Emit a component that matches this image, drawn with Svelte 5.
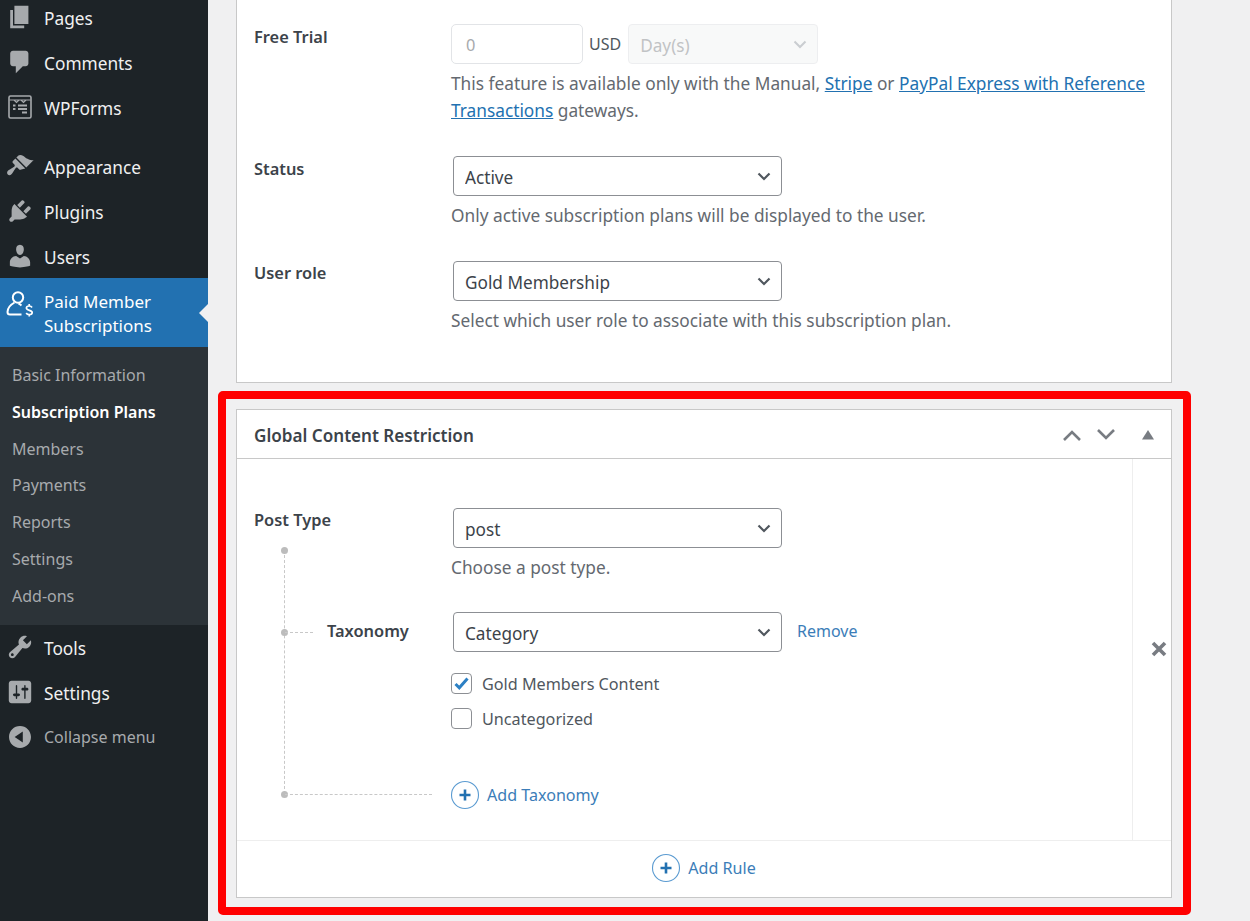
<script>
  // dashicons-style glyphs, 20x20 viewBox
  const icons = {
    pages: 'M6 15V2h10v13H6zm-1 1h8v2H3V5h2v11z',
    comments: 'M5 2h9c1.1 0 2 .9 2 2v7c0 1.1-.9 2-2 2h-2l-5 5v-5H5c-1.1 0-2-.9-2-2V4c0-1.1.9-2 2-2z',
    appearance: 'M14.48 11.06L7.41 3.99l1.5-1.5c.5-.56 2.3-.47 3.51.32 1.21.8 1.43 1.28 2.91 2.1 1.18.64 2.45 1.26 4.45.85zm-.71.71L6.7 4.7 4.93 6.47c-.39.39-.39 1.02 0 1.41l1.06 1.06c.39.39.39 1.03 0 1.42-.6.6-3.7 2.2-4.6 3.1-.9.9-.7 2-.1 2.6.6.6 1.7.7 2.6-.2.9-.9 2.5-3.9 3.1-4.5.39-.39 1.02-.39 1.41 0l1.06 1.06c.39.39 1.02.39 1.41 0z',
    plugins: 'M13.11 4.36L9.87 7.6 8 5.73l3.24-3.24c.35-.34 1.05-.2 1.56.32.52.51.66 1.21.31 1.55zm-8 1.77l.91-1.12 9.01 9.01-1.19.84c-.71.71-2.63 1.16-3.82 1.16H6.14L4.9 17.26c-.59.59-1.54.59-2.12 0-.59-.58-.59-1.53 0-2.12l1.24-1.24v-3.88c0-1.13.4-3.19 1.09-3.89zm7.26 3.97l3.24-3.24c.34-.35 1.04-.21 1.55.31.52.51.66 1.21.31 1.55l-3.24 3.25z',
    users: 'M10 9.25c-2.27 0-2.73-3.44-2.73-3.44C7 4.02 7.82 2 9.97 2c2.16 0 2.98 2.02 2.71 3.81 0 0-.41 3.44-2.68 3.44zm0 2.57L12.72 10c2.39 0 4.52 2.33 4.52 4.53v2.49s-3.65 1.13-7.24 1.13c-3.65 0-7.24-1.13-7.24-1.13v-2.49c0-2.25 1.94-4.48 4.47-4.48z',
    tools: 'M16.68 9.77c-1.34 1.34-3.3 1.67-4.95.99l-5.41 6.52c-.99.99-2.59.99-3.58 0s-.99-2.59 0-3.57l6.52-5.42c-.68-1.65-.35-3.61.99-4.95 1.28-1.28 3.12-1.62 4.72-1.06l-2.89 2.89 2.82 2.82 2.86-2.87c.53 1.58.18 3.39-1.08 4.65zM3.81 16.21c.4.39 1.04.39 1.43 0 .4-.4.4-1.04 0-1.43-.39-.4-1.03-.4-1.43 0-.39.39-.39 1.03 0 1.43z',
    settings: 'M18 16V4c0-1.1-.9-2-2-2H4c-1.1 0-2 .9-2 2v12c0 1.1.9 2 2 2h12c1.1 0 2-.9 2-2zM8 11h1c.55 0 1 .45 1 1s-.45 1-1 1H8v1.5c0 .28-.22.5-.5.5s-.5-.22-.5-.5V13H6c-.55 0-1-.45-1-1s.45-1 1-1h1V5.5c0-.28.22-.5.5-.5s.5.22.5.5V11zm5-2h-1c-.55 0-1-.45-1-1s.45-1 1-1h1V5.5c0-.28.22-.5.5-.5s.5.22.5.5V7h1c.55 0 1 .45 1 1s-.45 1-1 1h-1v5.5c0 .28-.22.5-.5.5s-.5-.22-.5-.5V9z',
    collapse: 'M10 2.16c4.33 0 7.84 3.51 7.84 7.84s-3.51 7.84-7.84 7.84S2.16 14.33 2.16 10 5.71 2.16 10 2.16zm2 11.72V6.12L6.18 9.97z'
  };

  const subItems = ['Basic Information', 'Subscription Plans', 'Members', 'Payments', 'Reports', 'Settings', 'Add-ons'];
</script>

{#snippet menuItem(label, icon)}
  <li class="menu-item">
    <span class="menu-icon">
      <svg viewBox="0 0 20 20" width="28" height="28"><path d={icons[icon]} fill="#a7aaad" /></svg>
    </span>
    {label}
  </li>
{/snippet}

{#snippet plusButton(label)}
  <span class="add-link">
    <svg viewBox="0 0 30 30" width="30" height="30">
      <circle cx="15" cy="15" r="13.5" fill="none" stroke="#5b9bd1" stroke-width="1.1" />
      <path d="M15 9.5v11M9.5 15h11" stroke="#2271b1" stroke-width="2.6" fill="none" />
    </svg>
    {label}
  </span>
{/snippet}

<div class="page">
  <nav class="sidebar">
    <ul class="menu">
      {@render menuItem('Pages', 'pages')}
      {@render menuItem('Comments', 'comments')}
      <li class="menu-item">
        <span class="menu-icon">
          <svg viewBox="0 0 24 24" width="24" height="24" fill="none" stroke="#a7aaad">
            <rect x="1" y="1" width="22" height="22" rx="1.5" stroke-width="1.6" />
            <path d="M1.5 5h21M6 5l2.5 2.5L11 5M13 5l2.5 2.5L18 5" stroke-width="1.1" />
            <path d="M5 10.5h2.5M10 10.5h9M5 14h2.5M10 14h9M14 17.5h5" stroke-width="1.8" />
          </svg>
        </span>
        WPForms
      </li>
    </ul>
    <ul class="menu second">
      {@render menuItem('Appearance', 'appearance')}
      {@render menuItem('Plugins', 'plugins')}
      <li class="menu-item users">
        <span class="menu-icon">
          <svg viewBox="0 0 20 20" width="28" height="28"><path d={icons.users} fill="#a7aaad" /></svg>
        </span>
        Users
      </li>
      <li class="menu-item current">
        <span class="menu-icon">
          <svg viewBox="0 0 28 28" width="28" height="28" fill="none" stroke="#fff" stroke-width="2">
            <circle cx="12" cy="7.5" r="5.2" />
            <path d="M8.5 12.5C4 15 1.5 19 1.5 22c0 1.5 1 2.5 2.5 2.5h11.5" />
            <path d="M15.5 15.5c-1-.8-1.8-1.5-3-2" />
            <path d="M26 17.5c-.5-1-1.5-1.5-2.8-1.5-1.6 0-2.8.8-2.8 2.1 0 3 5.8 1.5 5.8 4.5 0 1.3-1.2 2.1-2.9 2.1-1.4 0-2.5-.6-3.1-1.7M23.2 14v1.8M23.2 24.8v1.8" stroke-width="1.7" />
          </svg>
        </span>
        <span class="current-label">Paid Member Subscriptions</span>
        <span class="notch"></span>
      </li>
    </ul>
    <ul class="submenu">
      {#each subItems as item}
        <li class:active={item === 'Subscription Plans'}>{item}</li>
      {/each}
    </ul>
    <ul class="menu">
      {@render menuItem('Tools', 'tools')}
      {@render menuItem('Settings', 'settings')}
      <li class="menu-item collapse">
        <span class="menu-icon">
          <svg viewBox="0 0 20 20" width="28" height="28"><path d={icons.collapse} fill="#a7aaad" /></svg>
        </span>
        Collapse menu
      </li>
    </ul>
  </nav>

  <main class="content">
    <section class="card plan">
      <div class="row trial">
        <span class="label">Free Trial</span>
        <div>
          <div class="trial-fields">
            <input class="number" type="text" value="0" disabled />
            <span class="currency">USD</span>
            <select class="select unit" disabled><option>Day(s)</option></select>
          </div>
          <p class="help wide">
            This feature is available only with the Manual, <a href="#stripe">Stripe</a> or
            <a href="#paypal">PayPal Express with Reference</a>
            <a href="#paypal">Transactions</a> gateways.
          </p>
        </div>
      </div>
      <div class="row status">
        <span class="label">Status</span>
        <div>
          <select class="select"><option>Active</option></select>
          <p class="help">Only active subscription plans will be displayed to the user.</p>
        </div>
      </div>
      <div class="row role">
        <span class="label">User role</span>
        <div>
          <select class="select"><option>Gold Membership</option></select>
          <p class="help">Select which user role to associate with this subscription plan.</p>
        </div>
      </div>
    </section>

    <section class="card restriction">
      <header class="card-head">
        <h2>Global Content Restriction</h2>
        <div class="head-actions">
          <svg viewBox="0 0 20 12" width="20" height="12" fill="none" stroke="#787c82" stroke-width="2.6"><path d="M2 11l8-8 8 8" /></svg>
          <svg viewBox="0 0 20 12" width="20" height="12" fill="none" stroke="#787c82" stroke-width="2.6"><path d="M2 1l8 8 8-8" /></svg>
          <svg class="toggle" viewBox="0 0 12 10" width="12" height="10"><path d="M6 0l6 9.5H0z" fill="#787c82" /></svg>
        </div>
      </header>

      <div class="rule">
        <div class="rule-fields">
          <span class="tree-line"></span>
          <span class="dot dot-top"></span>
          <span class="dot dot-mid"></span>
          <span class="dot dot-end"></span>
          <span class="tick tick-mid"></span>
          <span class="tick tick-end"></span>

          <div class="row post-type">
            <span class="label">Post Type</span>
            <div>
              <select class="select"><option>post</option></select>
              <p class="help">Choose a post type.</p>
            </div>
          </div>

          <div class="row taxonomy">
            <span class="label indented">Taxonomy</span>
            <div>
              <div class="tax-select">
                <select class="select"><option>Category</option></select>
                <a class="remove" href="#remove">Remove</a>
              </div>
              <label class="check first"><input type="checkbox" checked /> Gold Members Content</label>
              <label class="check"><input type="checkbox" /> Uncategorized</label>
            </div>
          </div>

          <div class="row add-tax">
            <span></span>
            {@render plusButton('Add Taxonomy')}
          </div>
        </div>
        <div class="rule-side">
          <svg viewBox="0 0 16 16" width="16" height="16"><path d="M2 2l12 12M14 2L2 14" stroke="#787c82" stroke-width="3.6" /></svg>
        </div>
      </div>

      <footer class="card-foot">
        {@render plusButton('Add Rule')}
      </footer>
    </section>
  </main>

  <div class="highlight"></div>
</div>

<style>
  :global(body) {
    margin: 0;
    background: #f0f0f1;
    overflow: hidden;
  }

  .page {
    display: flex;
    position: relative;
    height: 921px;
    overflow: hidden;
    font-family: "Noto Sans", "Open Sans", sans-serif;
    font-size: 17.3px;
    color: #3c434a;
  }

  /* Sidebar */
  .sidebar {
    width: 208px;
    flex-shrink: 0;
    background: #1d2327;
    color: #f0f0f1;
  }

  ul {
    list-style: none;
    margin: 0;
    padding: 0;
  }

  .menu:first-child {
    margin-top: -5px;
  }

  .second {
    margin-top: 14px;
  }

  .menu-item {
    display: flex;
    align-items: center;
    position: relative;
    height: 45px;
    box-sizing: border-box;
    padding: 2px 0 0 44px;
    font-size: 17.3px;
  }

  .menu-icon {
    position: absolute;
    left: 6px;
    top: 8px;
    width: 28px;
    height: 28px;
    display: flex;
    align-items: center;
    justify-content: center;
  }

  .users {
    height: 44px;
  }

  .current {
    height: 69px;
    background: #2271b1;
    color: #fff;
    line-height: 24px;
    font-size: 17px;
  }

  .current .menu-icon {
    top: 12px;
  }

  .current-label {
    width: 130px;
  }

  .notch {
    position: absolute;
    right: 0;
    top: 26px;
    border: 9px solid transparent;
    border-right-color: #f0f0f1;
    border-left: 0;
  }

  .collapse {
    height: 43px;
    padding-top: 0;
    color: #a7aaad;
    font-size: 16px;
  }

  .submenu {
    background: #2c3338;
    height: 278px;
    padding-top: 10px;
    box-sizing: border-box;
    font-size: 16px;
    color: #a7aaad;
  }

  .submenu li {
    height: 36.8px;
    line-height: 36.8px;
    padding-left: 12px;
  }

  .submenu .active {
    color: #fff;
    font-weight: 600;
  }

  /* Content */
  .content {
    width: 936px;
    margin-left: 28px;
    flex-shrink: 0;
  }

  .card {
    background: #fff;
    border: 1px solid #c8c8c8;
    box-sizing: border-box;
  }

  .plan {
    height: 383px;
    border-top: 0;
    margin-bottom: 26px;
  }

  .row {
    display: grid;
    grid-template-columns: 197px 1fr;
    padding-left: 17px;
  }

  .label {
    font-weight: 600;
    font-size: 16.4px;
    line-height: 24px;
  }

  .trial {
    padding-top: 24px;
  }

  .trial .label,
  .status .label {
    margin-top: 1px;
  }

  .status,
  .role {
    padding-top: 32px;
  }

  .trial-fields {
    display: flex;
    align-items: center;
  }

  .number {
    width: 132px;
    height: 40px;
    box-sizing: border-box;
    border: 1px solid #e2e4e7;
    border-radius: 5px;
    background: #fff;
    padding: 0 14px;
    font: inherit;
    font-size: 16.4px;
    color: #a7aaad;
  }

  .currency {
    margin: 0 7px 0 6px;
    color: #50575e;
    font-size: 16px;
  }

  .select {
    display: block;
    width: 329px;
    height: 40px;
    box-sizing: border-box;
    margin-left: 2px;
    padding: 2px 32px 0 11px;
    border: 1px solid #8c8f94;
    border-radius: 4px;
    appearance: none;
    background: #fff url("data:image/svg+xml,%3Csvg xmlns='http://www.w3.org/2000/svg' width='14' height='9'%3E%3Cpath d='M1.5 1.5L7 7l5.5-5.5' fill='none' stroke='%2350575e' stroke-width='2.2'/%3E%3C/svg%3E") no-repeat right 10px center;
    font: inherit;
    font-size: 17.2px;
    color: #3c434a;
  }

  .unit {
    width: 190px;
    margin-left: 0;
    border-color: #e6e8ea;
    background-color: #f6f7f7;
    background-image: url("data:image/svg+xml,%3Csvg xmlns='http://www.w3.org/2000/svg' width='14' height='9'%3E%3Cpath d='M1.5 1.5L7 7l5.5-5.5' fill='none' stroke='%23b4b9be' stroke-width='2'/%3E%3C/svg%3E");
    color: #a7aaad;
  }

  .help {
    margin: 6px 0 0;
    line-height: 27px;
    color: #646970;
  }

  .wide {
    width: 700px;
  }

  a {
    color: #2271b1;
  }

  /* Restriction card */
  .restriction {
    height: 489px;
  }

  .card-head {
    display: flex;
    align-items: center;
    justify-content: space-between;
    height: 49px;
    box-sizing: border-box;
    padding: 2px 17px 0 17px;
    border-bottom: 1px solid #c8c8c8;
  }

  h2 {
    margin: 0;
    font-size: 17.1px;
    font-weight: 600;
    color: #3c434a;
  }

  .head-actions {
    display: flex;
    align-items: center;
    gap: 14px;
  }

  .toggle {
    margin-left: 12px;
  }

  .rule {
    display: flex;
    height: 381px;
    border-bottom: 1px solid #eeeeee;
  }

  .rule-fields {
    position: relative;
    flex: 1;
    min-width: 0;
    padding-top: 49px;
    border-right: 1px solid #eeeeee;
  }

  .rule-side {
    width: 38px;
    flex-shrink: 0;
    box-sizing: border-box;
    display: flex;
    align-items: center;
    justify-content: flex-end;
    padding: 0 4px 2px 0;
  }

  .taxonomy {
    margin-top: 31px;
  }

  .taxonomy .label {
    margin-top: 7px;
  }

  .indented {
    padding-left: 73px;
  }

  .tax-select {
    display: flex;
    align-items: center;
  }

  .remove {
    margin: 0 0 2px 15px;
    font-size: 16px;
    text-decoration: none;
    color: #3b7db8;
  }

  .check {
    display: flex;
    align-items: center;
    gap: 10px;
    height: 21px;
    margin-top: 14px;
    font-size: 16.2px;
    color: #50575e;
  }

  .check.first {
    margin-top: 21px;
  }

  .check input {
    appearance: none;
    width: 21px;
    height: 21px;
    margin: 0;
    border: 1px solid #8c8f94;
    border-radius: 4px;
    background: #fff;
  }

  .check input:checked {
    background: #fff url("data:image/svg+xml,%3Csvg xmlns='http://www.w3.org/2000/svg' width='15' height='13'%3E%3Cpath d='M1.5 7l3.8 3.8L13.5 1.5' fill='none' stroke='%232c80c4' stroke-width='3'/%3E%3C/svg%3E") no-repeat center;
  }

  .add-tax {
    margin-top: 51px;
  }

  .add-link {
    display: inline-flex;
    align-items: center;
    gap: 7px;
    color: #3b7db8;
    font-size: 16.1px;
    margin-left: -1px;
  }

  /* Connector drawn over the rule fields */
  .tree-line {
    position: absolute;
    left: 47px;
    top: 91px;
    height: 244px;
    border-left: 1px dashed #c8c8c8;
  }

  .dot {
    position: absolute;
    left: 44px;
    width: 7px;
    height: 7px;
    border-radius: 50%;
    background: #bcbcbc;
  }

  .dot-top { top: 88px; }
  .dot-mid { top: 170px; }
  .dot-end { top: 332px; }

  .tick {
    position: absolute;
    left: 48px;
    border-top: 1px dashed #c8c8c8;
  }

  .tick-mid { top: 173px; width: 28px; }
  .tick-end { top: 335px; width: 147px; }

  .card-foot {
    display: flex;
    align-items: center;
    justify-content: center;
    height: 56px;
    padding-bottom: 2px;
    box-sizing: border-box;
  }

  /* Annotation frame over the screenshot */
  .highlight {
    position: absolute;
    left: 218px;
    top: 391px;
    width: 973px;
    height: 524px;
    box-sizing: border-box;
    border: 8px solid #ff0000;
    border-radius: 5px;
  }
</style>
